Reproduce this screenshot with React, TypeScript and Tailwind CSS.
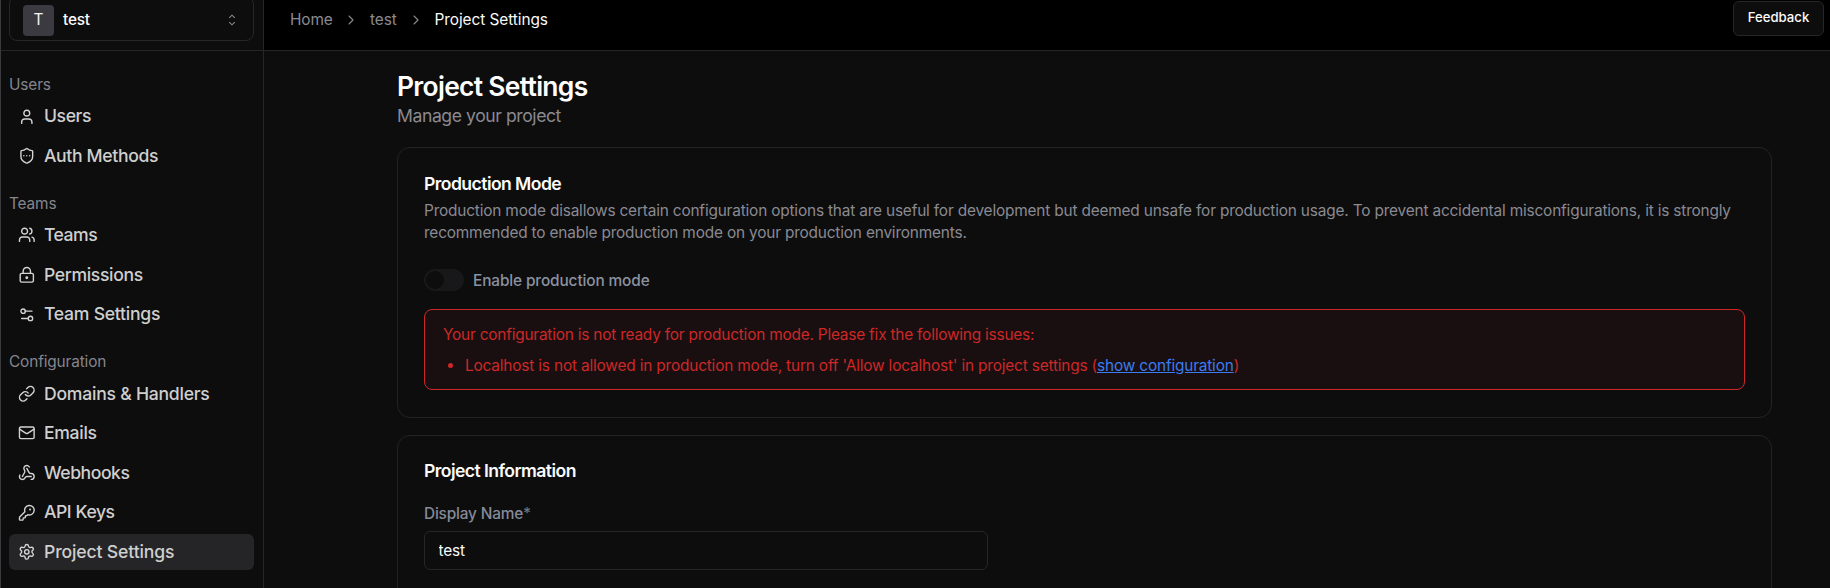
import type { ReactNode } from "react";
import {
  ChevronRight,
  KeyRound,
  Link as LinkIcon,
  LockKeyhole,
  Mail,
  Settings,
  Settings2,
  ShieldEllipsis,
  User,
  Users,
  Webhook,
  type LucideIcon,
} from "lucide-react";

type NavItem = { name: string; icon: LucideIcon; active?: boolean; tracking: string };
type NavSection = { label: string; items: NavItem[] };

const sections: NavSection[] = [
  {
    label: "Users",
    items: [
      { name: "Users", icon: User, tracking: "tracking-[-0.4px]" },
      { name: "Auth Methods", icon: ShieldEllipsis, tracking: "tracking-[-0.35px]" },
    ],
  },
  {
    label: "Teams",
    items: [
      { name: "Teams", icon: Users, tracking: "tracking-[-0.5px]" },
      { name: "Permissions", icon: LockKeyhole, tracking: "tracking-[-0.35px]" },
      { name: "Team Settings", icon: Settings2, tracking: "tracking-[-0.25px]" },
    ],
  },
  {
    label: "Configuration",
    items: [
      { name: "Domains & Handlers", icon: LinkIcon, tracking: "tracking-[-0.24px]" },
      { name: "Emails", icon: Mail, tracking: "tracking-[-0.3px]" },
      { name: "Webhooks", icon: Webhook, tracking: "tracking-[-0.45px]" },
      { name: "API Keys", icon: KeyRound, tracking: "tracking-[-0.45px]" },
      { name: "Project Settings", icon: Settings, active: true, tracking: "tracking-[-0.14px]" },
    ],
  },
];

function NavRow({ item }: { item: NavItem }) {
  const Icon = item.icon;
  return (
    <a
      className={`mt-[3.6px] flex h-9 items-center rounded-md pl-[9px] ${item.active ? "bg-[#252527]" : ""}`}
    >
      <Icon className="size-[17.6px] shrink-0 text-[#d4d4d4]" strokeWidth={1.9} />
      <span className={`ml-[8.4px] text-[17.6px] leading-6 font-medium text-[#cfcfcf] ${item.tracking}`}>
        {item.name}
      </span>
    </a>
  );
}

function Sidebar() {
  return (
    <aside className="flex w-[264px] shrink-0 flex-col border-x border-l-[#3a3a3c] border-r-[#262628] bg-[#0d0d0d]">
      <div className="flex h-[51px] shrink-0 flex-col border-b border-[#262628] pr-[9px] pl-2">
        <div className="-mt-1 flex h-[45px] shrink-0 items-center rounded-lg border border-[#262628] pr-[15px] pl-[13px]">
          <span className="mt-[3px] flex size-[31px] items-center justify-center rounded bg-[#3a3a40] text-[15.4px] text-[#f4f4f5]">
            T
          </span>
          <span className="mt-[3px] ml-[9px] flex-1 text-[15.4px] font-medium tracking-[-0.2px] text-[#fafafa]">
            test
          </span>
          <svg
            className="mt-[3px] h-3 w-[12px] text-[#8a8a8d]"
            viewBox="0 0 12 12"
            fill="none"
            stroke="currentColor"
            strokeWidth="1.1"
          >
            <path d="M3.2 3.9 6 1.2 8.8 3.9M3.2 8.1 6 10.8 8.8 8.1" />
          </svg>
        </div>
      </div>
      <nav className="flex flex-col pt-[4.3px] pr-[9px] pl-2">
        {sections.map((section) => (
          <div key={section.label}>
            <div className="h-[39.6px] pt-[18.8px] text-[15.4px] leading-[22px] tracking-[-0.14px] text-[#85858d]">
              {section.label}
            </div>
            {section.items.map((item) => (
              <NavRow key={item.name} item={item} />
            ))}
          </div>
        ))}
      </nav>
    </aside>
  );
}

function Header() {
  return (
    <header className="flex h-[51px] shrink-0 items-start justify-between border-b border-[#262628] bg-black pr-[6px] pl-[26px]">
      <nav className="mt-[9px] flex items-center text-[15.4px] leading-[22px] tracking-[-0.1px] text-[#8a8a92]">
        <span className="w-[42px]">Home</span>
        <ChevronRight className="mx-[11px] size-[16px]" strokeWidth={1.6} />
        <span className="w-[27px]">test</span>
        <ChevronRight className="mr-[10.5px] ml-[11px] size-[16px]" strokeWidth={1.6} />
        <span className="tracking-[-0.06px] text-[#fafafa]">Project Settings</span>
      </nav>
      <button className="mt-px h-[35px] w-[91px] rounded-md border border-[#262628] bg-[#0d0d0d] pb-[2px] text-[13.2px] font-medium text-[#fafafa]">
        Feedback
      </button>
    </header>
  );
}

function Card({ title, className, children }: { title: string; className: string; children: ReactNode }) {
  return (
    <section className={`flex shrink-0 flex-col rounded-[13px] border border-[#232325] px-[26px] ${className}`}>
      <h2 className="h-6 text-[17.6px] leading-[24px] font-semibold tracking-[-0.57px] text-[#fafafa]">{title}</h2>
      {children}
    </section>
  );
}

function ProductionMode() {
  return (
    <Card title="Production Mode" className="h-[271px] pt-6">
      <p className="mt-[3.5px] text-[15.4px] leading-[22px] tracking-[-0.178px] text-[#8a8a92]">
        Production mode disallows certain configuration options that are useful for development but deemed unsafe for
        production usage. To prevent accidental misconfigurations, it is strongly
        <br />
        recommended to enable production mode on your production environments.
      </p>
      <div className="mt-[25px] flex h-[22px] items-center">
        <span className="flex h-[22px] w-10 items-center rounded-full bg-[#18181a] px-[2px]">
          <span className="size-[18px] rounded-full bg-[#0d0d0d]" />
        </span>
        <span className="mt-[2px] ml-[9px] text-[15.4px] leading-[22px] font-medium tracking-[-0.12px] text-[#8b92a0]">
          Enable production mode
        </span>
      </div>
      <div className="mt-[18px] h-[81px] rounded-lg border border-[#cc2828] bg-[#190f10] pt-[14px] pl-[18px] text-[15.4px] leading-[22px] tracking-[-0.205px] text-[#cc2828]">
        <p>Your configuration is not ready for production mode. Please fix the following issues:</p>
        <ul className="mt-[9px]">
          <li className="flex items-center tracking-[-0.174px]">
            <span className="mr-[12px] ml-[5px] size-[5px] rounded-full bg-[#cc2828]" />
            <span>
              Localhost is not allowed in production mode, turn off 'Allow localhost' in project settings (
              <a className="text-[#3b7cf0] underline">show configuration</a>)
            </span>
          </li>
        </ul>
      </div>
    </Card>
  );
}

function ProjectInformation() {
  return (
    <Card title="Project Information" className="mt-[17px] h-[300px] pt-[23px]">
      <label className="mt-[20px] flex flex-col text-[15.4px] leading-[22px] font-medium tracking-[-0.18px] text-[#858a99]">
        <span>
          Display Name<span className="text-[#71717a]">*</span>
        </span>
        <input
          readOnly
          value="test"
          className="mt-[6px] h-[39px] w-[564px] rounded-md border border-[#262628] bg-transparent px-[13.5px] text-[15.4px] font-normal text-[#fafafa] outline-none"
        />
      </label>
    </Card>
  );
}

export default function App() {
  return (
    <div className="flex h-[588px] w-[1830px] overflow-hidden bg-[#0d0d0d] font-[Inter,sans-serif]">
      <Sidebar />
      <div className="flex min-w-0 flex-1 flex-col">
        <Header />
        <main className="flex min-h-0 flex-1 flex-col overflow-hidden pr-[58px] pl-[133px]">
          <h1 className="mt-[18px] h-[35px] text-[26.4px] leading-[35px] font-semibold tracking-[-0.69px] text-white">
            Project Settings
          </h1>
          <p className="mb-[19px] -mt-px text-[17.6px] leading-[25px] tracking-[-0.43px] text-[#8a8a92]">
            Manage your project
          </p>
          <ProductionMode />
          <ProjectInformation />
        </main>
      </div>
    </div>
  );
}
